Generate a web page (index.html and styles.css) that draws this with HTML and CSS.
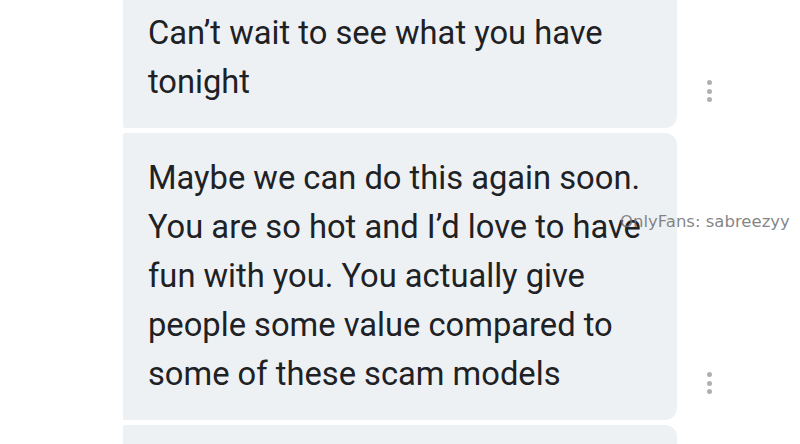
FILE: index.html
```html
<!DOCTYPE html>
<html lang="en">
<head>
  <meta charset="UTF-8" />
  <meta name="viewport" content="width=device-width, initial-scale=1" />
  <title>Messages</title>
  <link rel="stylesheet" href="styles.css">
</head>
<body>
  <div class="thread">
    <div class="row">
      <div class="bubble">Can’t wait to see what you have tonight</div>
      <div class="more"><span></span><span></span><span></span></div>
    </div>
    <div class="row">
      <div class="bubble">Maybe we can do this again soon. You are so hot and I’d love to have fun with you. You actually give people some value compared to some of these scam models</div>
      <div class="more"><span></span><span></span><span></span></div>
    </div>
    <div class="row">
      <div class="bubble">&nbsp;</div>
      <div class="more"></div>
    </div>
  </div>

  <div class="watermark">OnlyFans: sabreezyy</div>
</body>
</html>
```

FILE: styles.css
```css
body {
  margin: 0;
  background: #fff;
  font-family: Roboto, "Noto Sans", sans-serif;
  color: #202124;
  overflow: hidden;
  height: 444px;
}
.thread {
  display: flex;
  flex-direction: column;
  gap: 5px;
  margin-top: -12px;
  padding-left: 123px;
}
.row {
  display: flex;
  align-items: flex-end;
}
.bubble {
  width: 554px;
  box-sizing: border-box;
  padding: 21px 22px 21px 25px;
  background: #eef1f4;
  border-radius: 2px 12px 12px 2px;
  font-size: 32.7px;
  line-height: 49px;
}
.more {
  width: 64px;
  display: flex;
  flex-direction: column;
  align-items: center;
  gap: 3.5px;
  margin-bottom: 26px;
}
.more span {
  width: 5px;
  height: 5px;
  border-radius: 50%;
  background: #b0b0b0;
}
.watermark {
  position: absolute;
  left: 620px;
  top: 212px;
  font-family: "DejaVu Sans", sans-serif;
  font-size: 16.5px;
  color: rgba(110, 110, 110, 0.85);
}
```
